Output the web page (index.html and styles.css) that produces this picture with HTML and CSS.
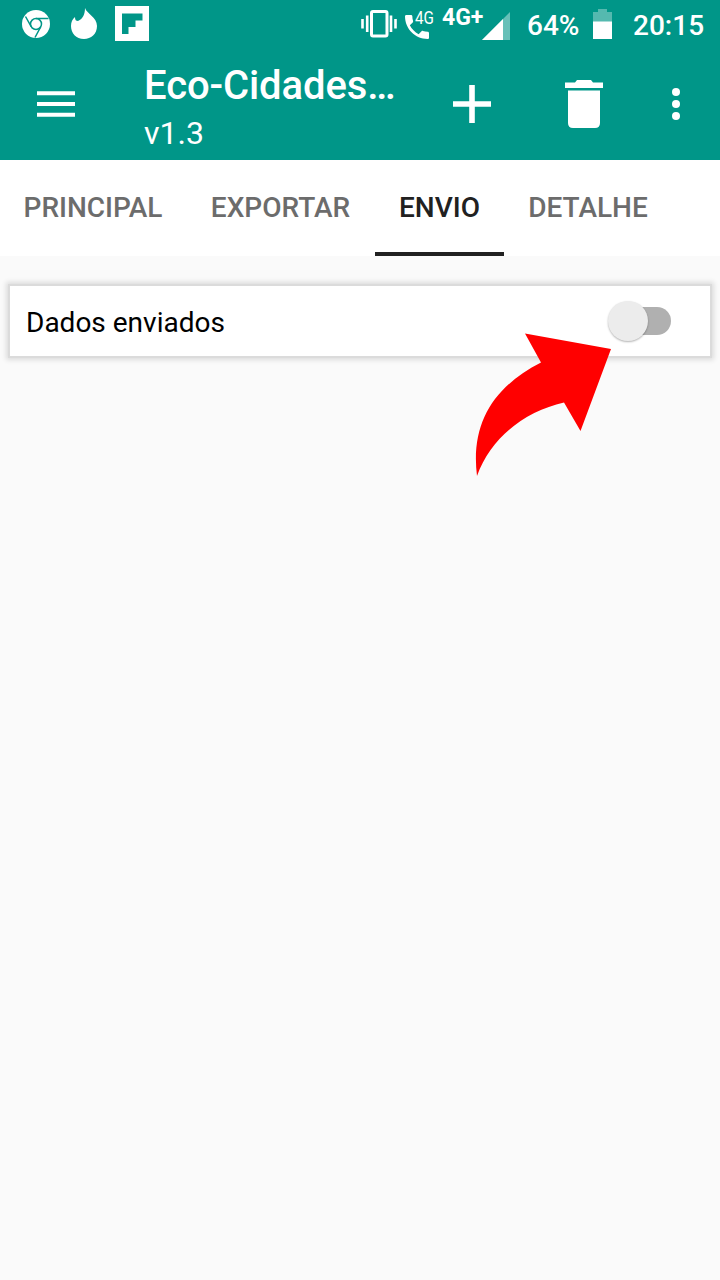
FILE: index.html
```html
<!DOCTYPE html>
<html lang="pt-BR">
<head>
<meta charset="utf-8">
<title>Eco-Cidades</title>
<link rel="stylesheet" href="styles.css">
</head>
<body>
<header class="header">
  <div class="status">
    <div class="status-left">
      <svg class="chrome" width="28" height="28" viewBox="0 0 28 28"><circle cx="14" cy="14" r="14" fill="#fff"/><g fill="none" stroke="#009688" stroke-width="1.500"><circle cx="14" cy="14" r="5.500"/><path d="M14 8.500H26.500M9.200 16.700L3.500 6.500M18.800 16.700L13 27.500"/></g></svg>
      <svg class="flame" width="28" height="31" viewBox="0 0 28 31"><path d="M15 0C17 6 27 9 27 18C27 26 21 31 14 31C6 31 1 25 1 18C1 14 2.500 11 5 9C5 12 6 13 8 13C13 11 15 6 15 0Z" fill="#fff"/></svg>
      <svg class="flip" width="34" height="35" viewBox="0 0 34 35"><path fill="#fff" fill-rule="evenodd" d="M0 0H34V35H0ZM7 7.500V28H13.500V21H20.500V14.500H27.500V7.500Z"/></svg>
    </div>
    <div class="status-right">
      <svg class="vibrate" width="36" height="28" viewBox="0 0 36 28"><rect x="10.500" y="1.500" width="15.500" height="24.500" rx="1.500" fill="none" stroke="#fff" stroke-width="3"/><path d="M1.500 9V18.500M6.200 5.500V22M30 5.500V22M34.500 9V18.500" stroke="#fff" stroke-width="2.600"/></svg>
      <div class="call">
        <svg width="24" height="24" viewBox="3 3 18 18"><path fill="#fff" d="M20 15.500c-1.250 0-2.450-.2-3.570-.57-.35-.11-.74-.03-1.020.24l-2.200 2.200c-2.830-1.440-5.150-3.750-6.590-6.590l2.200-2.210c.28-.26.36-.65.250-1C8.700 6.450 8.500 5.250 8.500 4c0-.55-.45-1-1-1H4c-.55 0-1 .45-1 1 0 9.390 7.610 17 17 17 .55 0 1-.45 1-1v-3.500c0-.55-.45-1-1-1z"/></svg>
        <span class="call-net">4G</span>
      </div>
      <span class="net">4G+</span>
      <svg class="signal" width="28" height="28" viewBox="0 0 28 28"><path d="M28 0V28H0Z" fill="#66c0b8"/><path d="M21 7V28H0Z" fill="#fff"/></svg>
      <span class="percent">64%</span>
      <svg class="battery" width="19" height="30" viewBox="0 0 19 30"><path d="M5 0H14V3H19V13H0V3H5Z" fill="#55b9af"/><path d="M0 12.500H19V30H0Z" fill="#fff"/></svg>
      <span class="clock">20:15</span>
    </div>
  </div>
  <div class="toolbar">
    <svg class="menu" width="38" height="26" viewBox="0 0 38 26"><path d="M0 2.200H38M0 13H38M0 23.800H38" stroke="#fff" stroke-width="4"/></svg>
    <div class="titles">
      <h1 class="title">Eco-Cidades…</h1>
      <div class="version">v1.3</div>
    </div>
    <svg class="add" width="38" height="38" viewBox="0 0 38 38"><path d="M19 0V38M0 19H38" stroke="#fff" stroke-width="5.600"/></svg>
    <svg class="trash" width="38" height="48" viewBox="0 0 38 48"><path fill="#fff" d="M0 2.500H10L12 0H26L28 2.500H38V8H0ZM3 10.500H35V43Q35 48 30 48H8Q3 48 3 43Z"/></svg>
    <svg class="more" width="8" height="32" viewBox="0 0 8 32"><circle cx="4" cy="4" r="4"/><circle cx="4" cy="16" r="4"/><circle cx="4" cy="28" r="4"/></svg>
  </div>
</header>
<nav class="tabs">
  <div class="tab tab-principal">PRINCIPAL</div>
  <div class="tab tab-exportar">EXPORTAR</div>
  <div class="tab tab-envio active">ENVIO</div>
  <div class="tab tab-detalhe">DETALHE</div>
</nav>
<main class="content">
  <section class="card">
    <span class="label">Dados enviados</span>
    <div class="switch"><div class="thumb"></div></div>
  </section>
  <svg class="arrow" width="136" height="144" viewBox="475 333 136 144"><path fill="#f00" d="M525 333.500L611 349L580.500 431L564 402.500C526 411 491 437 477 476C470.500 424 493 387 541 362.500Z"/></svg>
</main>
</body>
</html>
```
FILE: styles.css
```css
* { box-sizing: border-box; }
body {
  margin: 0;
  height: 1280px;
  background: #fafafa;
  font-family: Roboto, "Liberation Sans", sans-serif;
  overflow: hidden;
}
svg { display: block; flex: none; }
.header { height: 160px; background: #009688; color: #fff; }
.status { display: flex; justify-content: space-between; height: 48px; padding: 0 16px 0 22px; }
.status-left, .status-right { display: flex; align-items: flex-start; }
.status-right { font-weight: 500; white-space: nowrap; }
.chrome { margin-top: 10px; }
.flame { margin: 8px 0 0 20px; }
.flip { margin: 6px 0 0 17px; }
.vibrate { margin-top: 10px; }
.call { position: relative; width: 29px; margin: 15px 0 0 8px; }
.call-net {
  position: absolute;
  left: 10px;
  top: -7px;
  font-size: 17.5px;
  line-height: 20px;
  font-weight: 400;
  transform: scaleX(.87);
  transform-origin: left;
}
.net { width: 40px; margin: 6px 0 0 8px; font-size: 23px; line-height: 24px; font-weight: 700; }
.signal { margin: 12px 0 0; }
.percent { width: 52px; margin: 10px 0 0 17px; font-size: 28px; line-height: 32px; }
.battery { margin: 9px 0 0 14px; }
.clock { width: 71px; margin: 10px 0 0 21px; font-size: 28px; line-height: 32px; }
.toolbar { display: flex; align-items: center; height: 112px; padding: 0 40px 0 37px; }
.titles { width: 253px; margin-left: 69px; padding-top: 11px; white-space: nowrap; }
.title { margin: 0; font-size: 40px; line-height: 48px; font-weight: 500; letter-spacing: -.1px; }
.version { font-size: 32px; line-height: 47px; }
.add { margin-left: 56px; }
.trash { margin-left: 74px; }
.more { margin-left: auto; fill: #fff; }
.tabs { display: flex; height: 96px; background: #fff; }
.tab {
  padding-top: 31px;
  text-align: center;
  font-size: 28px;
  line-height: 34px;
  font-weight: 500;
  color: #6c6c6c;
  white-space: nowrap;
}
.tab-principal { width: 186px; }
.tab-exportar { width: 189px; }
.tab-envio { width: 129px; }
.tab-detalhe { width: 168px; }
.tab.active { color: #212121; border-bottom: 4px solid #212121; }
.content { position: relative; padding: 30px 10px 0; }
.card {
  display: flex;
  align-items: center;
  justify-content: space-between;
  height: 70px;
  padding: 0 39px 0 16px;
  background: #fff;
  box-shadow: 0 0 0 2px #dbdbdb, 0 0 5px 4px rgba(0, 0, 0, .12);
}
.label { font-size: 28px; line-height: 34px; color: #000; padding-top: 3px; }
.switch { position: relative; width: 56px; height: 28px; border-radius: 14px; background: #b0b0b0; }
.thumb {
  position: absolute;
  left: -7px;
  top: -6px;
  width: 40px;
  height: 40px;
  border-radius: 50%;
  background: #ececec;
  box-shadow: 0 1px 2px rgba(0, 0, 0, .3);
}
.arrow { position: absolute; left: 475px; top: 77px; }
```
